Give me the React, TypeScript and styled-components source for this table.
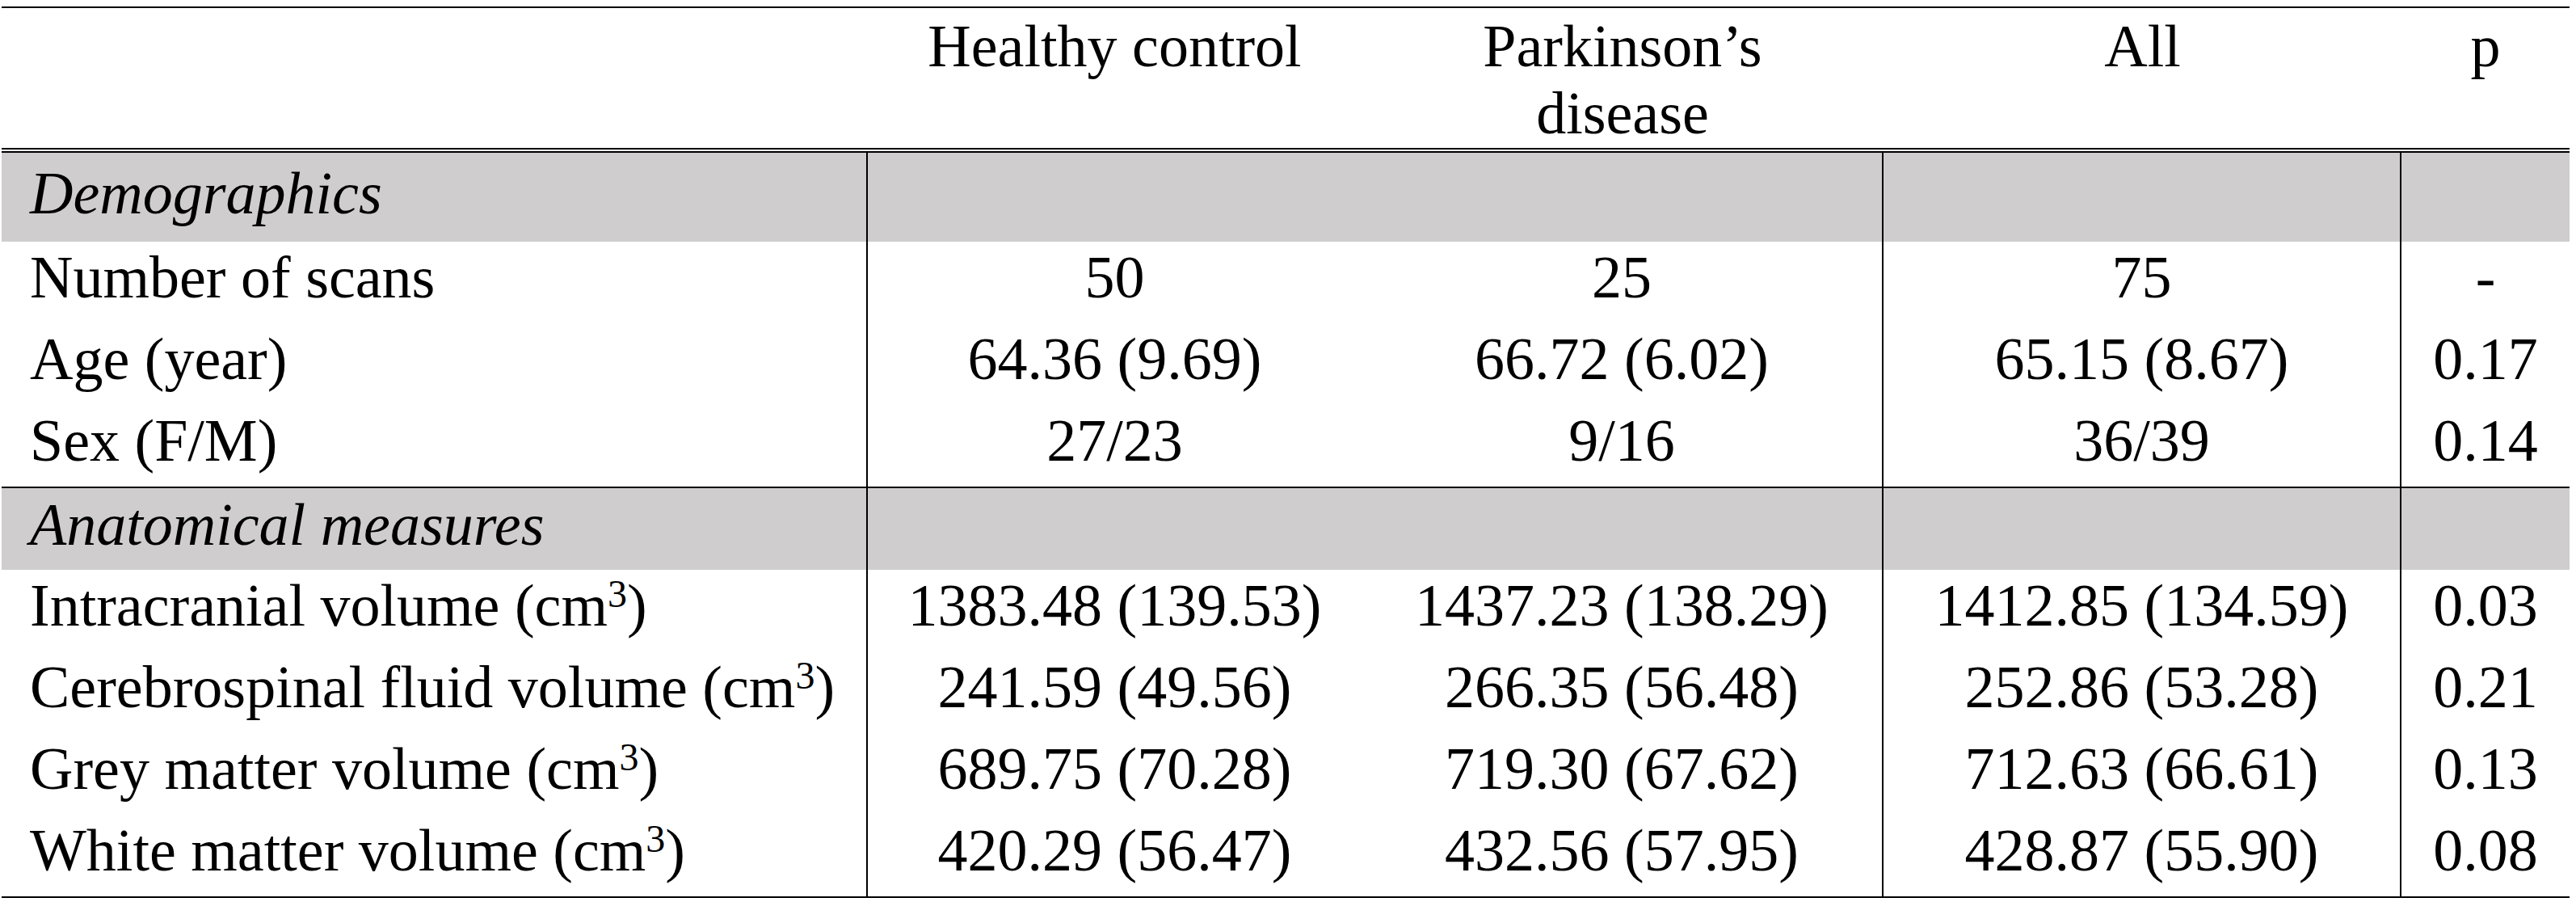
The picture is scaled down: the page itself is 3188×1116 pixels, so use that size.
import React from "react";
import styled, { createGlobalStyle } from "styled-components";

const GlobalStyle = createGlobalStyle`
  html, body {
    margin: 0;
    padding: 0;
    background: #ffffff;
  }
  body {
    font-family: "Liberation Serif", "Times New Roman", serif;
    color: #000000;
  }
`;

// column widths measured off the original table
const COLUMNS = "1072px 611px 646px 641px 208px";

const TableWrapper = styled.div`
  width: 3178px;
  margin: 8px 0 0 2px;
  border-top: 2px solid #000;
  border-bottom: 2px solid #000;
  font-size: 74px;
`;

const HeaderRow = styled.div`
  display: grid;
  grid-template-columns: ${COLUMNS};
  height: 173px;
  border-bottom: 6px double #000;
  box-sizing: content-box;
`;

const HeadCell = styled.div`
  text-align: center;
  line-height: 83px;
  padding-top: 6px;
`;

const Row = styled.div<{ $height?: number; $shaded?: boolean; $ruled?: boolean }>`
  display: grid;
  grid-template-columns: ${COLUMNS};
  height: ${(p) => p.$height ?? 101}px;
  background: ${(p) => (p.$shaded ? "#cfcdce" : "transparent")};
  border-top: ${(p) => (p.$ruled ? "2px solid #000" : "none")};
  box-sizing: content-box;
`;

const Cell = styled.div<{ $divider?: boolean; $label?: boolean; $padTop?: number }>`
  box-sizing: border-box;
  border-right: ${(p) => (p.$divider ? "2px solid #000" : "none")};
  text-align: ${(p) => (p.$label ? "left" : "center")};
  padding-left: ${(p) => (p.$label ? "35px" : "0")};
  padding-top: ${(p) => p.$padTop ?? 2}px;
  line-height: 85px;
  white-space: nowrap;
`;

const SectionTitle = styled.span`
  font-style: italic;
`;

const Sup = styled.sup`
  font-size: 48px;
  line-height: 0;
  vertical-align: 23px;
`;

type DataRow = {
  label: React.ReactNode;
  hc: string;
  pd: string;
  all: string;
  p: string;
};

const cm3 = (
  <>
    (cm<Sup>3</Sup>)
  </>
);

const demographics: DataRow[] = [
  { label: "Number of scans", hc: "50", pd: "25", all: "75", p: "-" },
  { label: "Age (year)", hc: "64.36 (9.69)", pd: "66.72 (6.02)", all: "65.15 (8.67)", p: "0.17" },
  { label: "Sex (F/M)", hc: "27/23", pd: "9/16", all: "36/39", p: "0.14" },
];

const anatomical: DataRow[] = [
  {
    label: <>Intracranial volume {cm3}</>,
    hc: "1383.48 (139.53)",
    pd: "1437.23 (138.29)",
    all: "1412.85 (134.59)",
    p: "0.03",
  },
  {
    label: <>Cerebrospinal fluid volume {cm3}</>,
    hc: "241.59 (49.56)",
    pd: "266.35 (56.48)",
    all: "252.86 (53.28)",
    p: "0.21",
  },
  {
    label: <>Grey matter volume {cm3}</>,
    hc: "689.75 (70.28)",
    pd: "719.30 (67.62)",
    all: "712.63 (66.61)",
    p: "0.13",
  },
  {
    label: <>White matter volume {cm3}</>,
    hc: "420.29 (56.47)",
    pd: "432.56 (57.95)",
    all: "428.87 (55.90)",
    p: "0.08",
  },
];

const Section = ({
  title,
  height,
  padTop,
  ruled,
}: {
  title: string;
  height: number;
  padTop: number;
  ruled?: boolean;
}) => (
  <Row $shaded $height={height} $ruled={ruled}>
    <Cell $label $divider $padTop={padTop}>
      <SectionTitle>{title}</SectionTitle>
    </Cell>
    <Cell />
    <Cell $divider />
    <Cell $divider />
    <Cell />
  </Row>
);

const Line = ({ row }: { row: DataRow }) => (
  <Row>
    <Cell $label $divider>
      {row.label}
    </Cell>
    <Cell>{row.hc}</Cell>
    <Cell $divider>{row.pd}</Cell>
    <Cell $divider>{row.all}</Cell>
    <Cell>{row.p}</Cell>
  </Row>
);

const App = () => {
  return (
    <>
      <GlobalStyle />
      <TableWrapper>
        <HeaderRow>
          <HeadCell />
          <HeadCell>Healthy control</HeadCell>
          <HeadCell>
            Parkinson’s
            <br />
            disease
          </HeadCell>
          <HeadCell>All</HeadCell>
          <HeadCell>p</HeadCell>
        </HeaderRow>
        <Section title="Demographics" height={110} padTop={8} />
        {demographics.map((r, i) => (
          <Line key={i} row={r} />
        ))}
        <Section title="Anatomical measures" height={101} padTop={3} ruled />
        {anatomical.map((r, i) => (
          <Line key={i} row={r} />
        ))}
      </TableWrapper>
    </>
  );
};

export default App;
